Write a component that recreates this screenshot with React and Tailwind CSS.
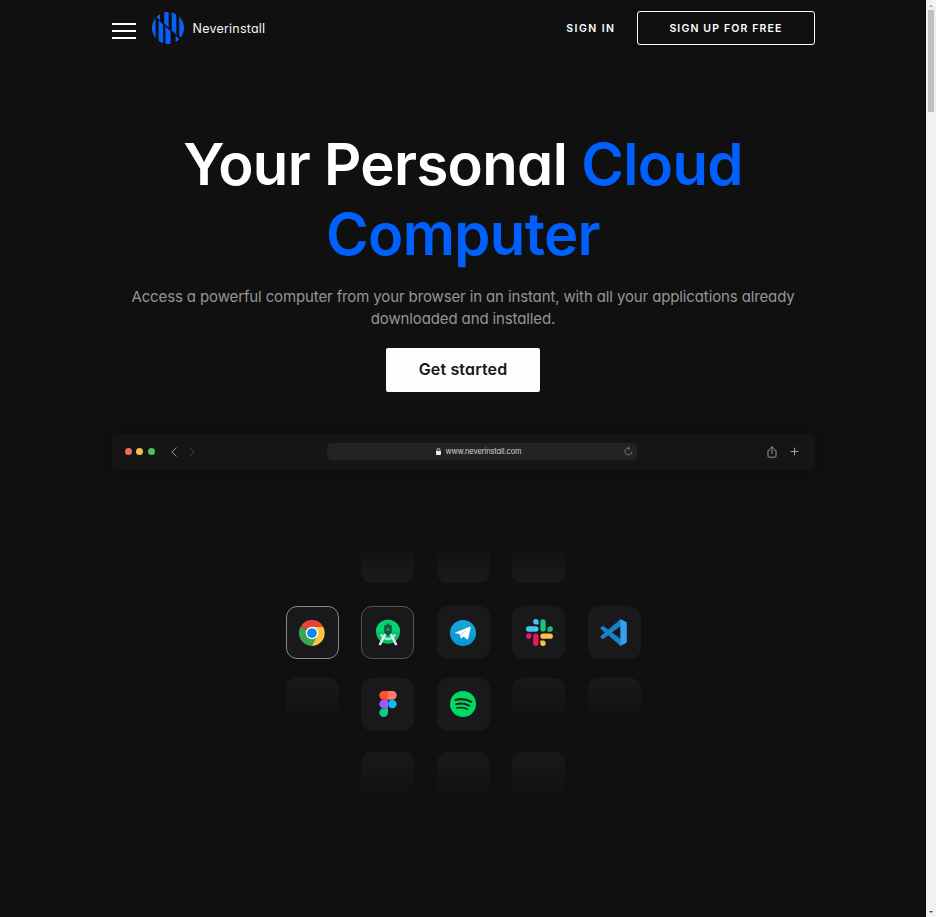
import React from "react";

function Logo() {
  return (
    <svg className="h-8 w-8" viewBox="0 0 32 32" fill="#0860f6">
      <defs>
        <clipPath id="disc"><circle cx="16" cy="16" r="16" /></clipPath>
      </defs>
      <g clipPath="url(#disc)">
        <path d="M0 5h3.6v22H0z" />
        <path d="M4.6 0H8v8.2L4.6 5z" />
        <path d="M6.6 8.2 11.2 12.4V32H6.6z" />
        <path d="M12.2 0h4.4v15.6l-4.4-4z" />
        <path d="M13.4 14.4 18.6 19.2V32h-5.2z" />
        <path d="M19.8 0h4.5v22.6l-4.5-4z" />
        <path d="M23.6 23.8 27.2 27v5h-3.6z" />
        <path d="M27.2 0H32v28l-4.8-4z" />
      </g>
    </svg>
  );
}

function Header() {
  return (
    <header className="flex h-[56px] items-center">
      <div className="mt-[5px] flex w-6 flex-col gap-[5px]">
        <span className="h-[2px] bg-white" />
        <span className="h-[2px] bg-white" />
        <span className="h-[2px] bg-white" />
      </div>
      <div className="ml-4 flex items-center gap-2">
        <Logo />
        <span className="whitespace-nowrap pl-px pt-px text-[12.5px] leading-4 tracking-[0.22px] text-[#f5f5f5]">Neverinstall</span>
      </div>
      <a className="ml-auto whitespace-nowrap pt-px text-[10.5px] font-semibold tracking-[1.45px] text-white">SIGN IN</a>
      <button className="ml-[21px] h-[34px] w-[178px] whitespace-nowrap rounded-[3px] border border-white pl-px pt-px text-[10.5px] font-semibold tracking-[1.15px] text-white">
        SIGN UP FOR FREE
      </button>
    </header>
  );
}

function Hero() {
  return (
    <section className="flex flex-col items-center pt-[73px] text-center">
      <h1 className="whitespace-nowrap text-[58px] font-semibold leading-[70px] tracking-[-0.65px] text-white">
        Your Personal <span className="text-[#0060fd]">Cloud<br />Computer</span>
      </h1>
      <p className="mt-[17px] whitespace-nowrap text-[15px] leading-[22px] tracking-[-0.125px] text-[#959595]">
        Access a powerful computer from your browser in an instant, with all your applications already<br />
        downloaded and installed.
      </p>
      <button className="mt-[18px] h-[44px] w-[154px] rounded-[2px] bg-[#fdfdfd] pb-[2px] text-[16px] font-semibold tracking-[0.15px] text-[#161616]">
        Get started
      </button>
    </section>
  );
}

function BrowserBar() {
  return (
    <div className="mt-[42px] flex h-[36px] items-center rounded bg-[#151515] pb-px pl-[13px] pr-[16px] shadow-[0_0_6px_rgba(21,21,21,0.5)]">
      <div className="flex gap-[4.5px]">
        <span className="h-[7px] w-[7px] rounded-full bg-[#ed6b60]" />
        <span className="h-[7px] w-[7px] rounded-full bg-[#f5bf58]" />
        <span className="h-[7px] w-[7px] rounded-full bg-[#55bf5c]" />
      </div>
      <svg className="ml-[15px] h-[10px] w-[26px]" viewBox="0 0 26 10" fill="none" strokeWidth="1">
        <path d="M6.5.7 1.8 5l4.7 4.3" stroke="#9a9a9a" />
        <path d="m19.5.7 4.7 4.3-4.7 4.3" stroke="#424242" />
      </svg>
      <div className="ml-[131px] flex h-[17px] w-[310px] items-center rounded-[5px] bg-[#232323] pr-[4px]">
        <svg className="ml-[109px] h-[7px] w-[5px]" viewBox="0 0 5 7">
          <rect y="2.9" width="5" height="4.1" rx=".7" fill="#ececec" />
          <path d="M1 3.3V2a1.5 1.5 0 0 1 3 0v1.3" fill="none" stroke="#ececec" strokeWidth=".8" />
        </svg>
        <span className="ml-[5px] whitespace-nowrap text-[7.5px] leading-[10px] tracking-[-0.12px] text-[#d5d5d5]">www.neverinstall.com</span>
        <svg className="ml-auto h-[9px] w-[9px]" viewBox="0 0 9 9" fill="none" stroke="#8c8c8c" strokeWidth=".8">
          <path d="M5.2 1.2A3.4 3.4 0 1 0 7.8 4.4M4 .1l1.7 1.3-1.5 1.5" />
        </svg>
      </div>
      <svg className="ml-auto h-[12px] w-[10px]" viewBox="0 0 10 12" fill="none" stroke="#a5a5a5" strokeWidth=".9">
        <path d="M3.2 4H1.9Q1 4 1 4.9v5.4q0 .9.9.9h6.2q.9 0 .9-.9V4.9Q9 4 8.1 4H6.8M5 8V.8M2.9 2.8 5 .7l2.1 2.1" />
      </svg>
      <svg className="ml-[13px] h-[9px] w-[9px]" viewBox="0 0 9 9" stroke="#a5a5a5" strokeWidth="1">
        <path d="M4.5.7v7.6M.7 4.5h7.6" />
      </svg>
    </div>
  );
}

const Chrome = () => (
  <svg className="h-[26px] w-[26px]" viewBox="0 0 48 48">
    <path d="M24 24 3.2 12A24 24 0 0 1 44.8 12L44 14H24z" fill="#ea4335" />
    <path d="M24 24V13h20.8A24 24 0 0 1 24 48l-2-3z" fill="#fcc63c" />
    <path d="M24 24 33.5 29.5 24 48A24 24 0 0 1 3.2 12z" fill="#40a351" />
    <circle cx="24" cy="24" r="11.5" fill="#fff" />
    <circle cx="24" cy="24" r="9" fill="#1188ec" />
  </svg>
);

const AndroidStudio = () => (
  <svg className="h-[27px] w-[26px]" viewBox="0 0 26 27">
    <circle cx="13" cy="12.7" r="12" fill="#07c160" />
    <path d="M1 12.7a12 12 0 0 1 24 0z" fill="#05d371" />
    <path d="M5.5 15.5Q13 24.5 20.5 15.5" fill="none" stroke="#9ce9dc" strokeWidth="2.4" />
    <path d="m10.2 15-5.5 11M15.8 15l5.5 11" stroke="#caf6f2" strokeWidth="2.5" />
    <path d="M11.7 4.5h2.6v1.7h2.5v7.6L13 17l-3.8-3.2V6.2h2.5z" fill="#175641" />
    <circle cx="13" cy="10.5" r="1.4" fill="#10aa5c" />
  </svg>
);

const Telegram = () => (
  <svg className="h-[26px] w-[26px]" viewBox="0 0 26 26">
    <defs><linearGradient id="tg" x2="0" y2="1"><stop stopColor="#18a6dc" /><stop offset="1" stopColor="#0797d0" /></linearGradient></defs>
    <circle cx="13" cy="13" r="13" fill="url(#tg)" />
    <path d="M5.2 12.6 20 6.8q.8-.2.6.9l-2.4 11.1q-.3 1-1.2.5l-3.7-2.8-1.9 1.8q-.5.4-.6-.3l-.9-3.7-4.6-1.2q-.8-.3-.1-.5z" fill="#fff" />
    <path d="m10 14.3 7.4-4.8-6.1 5.6-.6 3.1z" fill="#bddff0" />
  </svg>
);

const Slack = () => (
  <svg className="ml-px h-[27px] w-[27px]" viewBox="0 0 54 54">
    <path d="M19.7.13a5.38 5.38 0 1 0 0 10.76h5.38V5.5A5.38 5.38 0 0 0 19.7.13m0 14.36H5.38a5.38 5.38 0 0 0 0 10.76h14.34a5.38 5.38 0 0 0 0-10.76" fill="#44c4f4" />
    <path d="M53.76 19.88a5.38 5.38 0 0 0-10.75 0v5.38h5.38a5.38 5.38 0 0 0 5.37-5.38m-14.34 0V5.52a5.38 5.38 0 0 0-10.75 0v14.36a5.38 5.38 0 0 0 10.75 0" fill="#14c47a" />
    <path d="M34.05 54a5.38 5.38 0 0 0 0-10.76h-5.38v5.38A5.38 5.38 0 0 0 34.05 54m0-14.36h14.33a5.38 5.38 0 0 0 0-10.76H34.05a5.38 5.38 0 0 0 0 10.76" fill="#fdc044" />
    <path d="M0 34.25a5.38 5.38 0 0 0 10.75 0v-5.38H5.38A5.38 5.38 0 0 0 0 34.25m14.34 0v14.37a5.38 5.38 0 0 0 10.75 0V34.25a5.38 5.38 0 0 0-10.75 0" fill="#e8185e" />
  </svg>
);

const Code = () => (
  <svg className="mr-px h-[27px] w-[27px]" viewBox="0 0 26 26">
    <path d="M.5 8.5 2.2 7q.7-.4 1.4.1L20 19.3V26L.7 9.7q-.6-.6-.2-1.2z" fill="#1684cc" />
    <path d="M.5 17.5 2.2 19q.7.4 1.4-.1L20 6.7V0L.7 16.3q-.6.6-.2 1.2z" fill="#1a7fc6" />
    <path d="m19.3.1 5.5 2.5q1 .5 1 1.4v18q0 .9-1 1.4l-5.5 2.5q-.8.3-1.2-.3 1.5 1 1.5-.8V1.2q0-1.8-1.5-.8.4-.6 1.2-.3z" fill="#32a2ea" />
  </svg>
);

const Figma = () => (
  <svg className="mb-[2px] h-[26px] w-[18px]" viewBox="0 0 18 27">
    <path d="M9 0H4.5a4.5 4.5 0 0 0 0 9H9z" fill="#ff5330" />
    <path d="M9 0h4.5a4.5 4.5 0 0 1 0 9H9z" fill="#ff7a6c" />
    <path d="M9 9H4.5a4.5 4.5 0 0 0 0 9H9z" fill="#a259ff" />
    <circle cx="13.5" cy="13.5" r="4.5" fill="#12b6fc" />
    <path d="M9 18H4.5A4.5 4.5 0 1 0 9 22.5z" fill="#0acf83" />
  </svg>
);

const Spotify = () => (
  <svg className="mb-[2px] h-[26px] w-[26px]" viewBox="0 0 26 26">
    <circle cx="13" cy="13" r="13" fill="#00da67" />
    <g fill="none" stroke="#132719" strokeLinecap="round">
      <path d="M5.5 9q8-2.3 15.5 1.8" strokeWidth="2.3" />
      <path d="M6.2 13.2q7-1.9 13 1.6" strokeWidth="1.9" />
      <path d="M6.8 17q6-1.5 10.8 1.3" strokeWidth="1.5" />
    </g>
  </svg>
);

function Tile({ look = "bg-[#19181a]", children }) {
  return <div className={"flex h-[53px] w-[53px] items-center justify-center rounded-[11px] " + look}>{children}</div>;
}

const rising = "bg-linear-to-t from-[#191919] from-10% to-[#101010] to-80%";
const falling = "bg-linear-to-b from-[#191919] to-[#101010] to-90%";

function AppGrid() {
  return (
    <div className="mt-[60px] flex flex-col items-center">
      <div className="flex gap-[22.5px]">
        <Tile look={rising} /><Tile look={rising} /><Tile look={rising} />
      </div>
      <div className="mt-[23px] flex gap-[22.5px]">
        <Tile look="bg-[#19181a] border border-[#8a8a8a]"><Chrome /></Tile>
        <Tile look="bg-[#19181a] border border-[#555]"><AndroidStudio /></Tile>
        <Tile><Telegram /></Tile>
        <Tile><Slack /></Tile>
        <Tile><Code /></Tile>
      </div>
      <div className="mt-[19px] flex gap-[22.5px]">
        <Tile look={falling} />
        <Tile><Figma /></Tile>
        <Tile><Spotify /></Tile>
        <Tile look={falling} /><Tile look={falling} />
      </div>
      <div className="mt-[21px] flex gap-[22.5px]">
        <Tile look={falling} /><Tile look={falling} /><Tile look={falling} />
      </div>
    </div>
  );
}

function Scrollbar() {
  return (
    <div className="flex w-[10px] flex-col items-center bg-[#f1f1f1]">
      <svg className="h-[10px] w-[10px]" viewBox="0 0 10 10" fill="#a0a0a0"><path d="M3 7h4L5 5z" /></svg>
      <div className="h-[102px] w-[6px] bg-[#c1c1c1]" />
      <svg className="mt-auto h-[10px] w-[10px]" viewBox="0 0 10 10" fill="#505050"><path d="M3 4h4L5 6z" /></svg>
    </div>
  );
}

export default function App() {
  return (
    <div className="flex h-[917px] w-[936px] overflow-hidden bg-[#101010] font-['Inter',sans-serif] [font-feature-settings:'cv11']">
      <main className="flex flex-1 justify-center">
        <div className="w-[703px]">
          <Header />
          <Hero />
          <BrowserBar />
          <AppGrid />
        </div>
      </main>
      <Scrollbar />
    </div>
  );
}
